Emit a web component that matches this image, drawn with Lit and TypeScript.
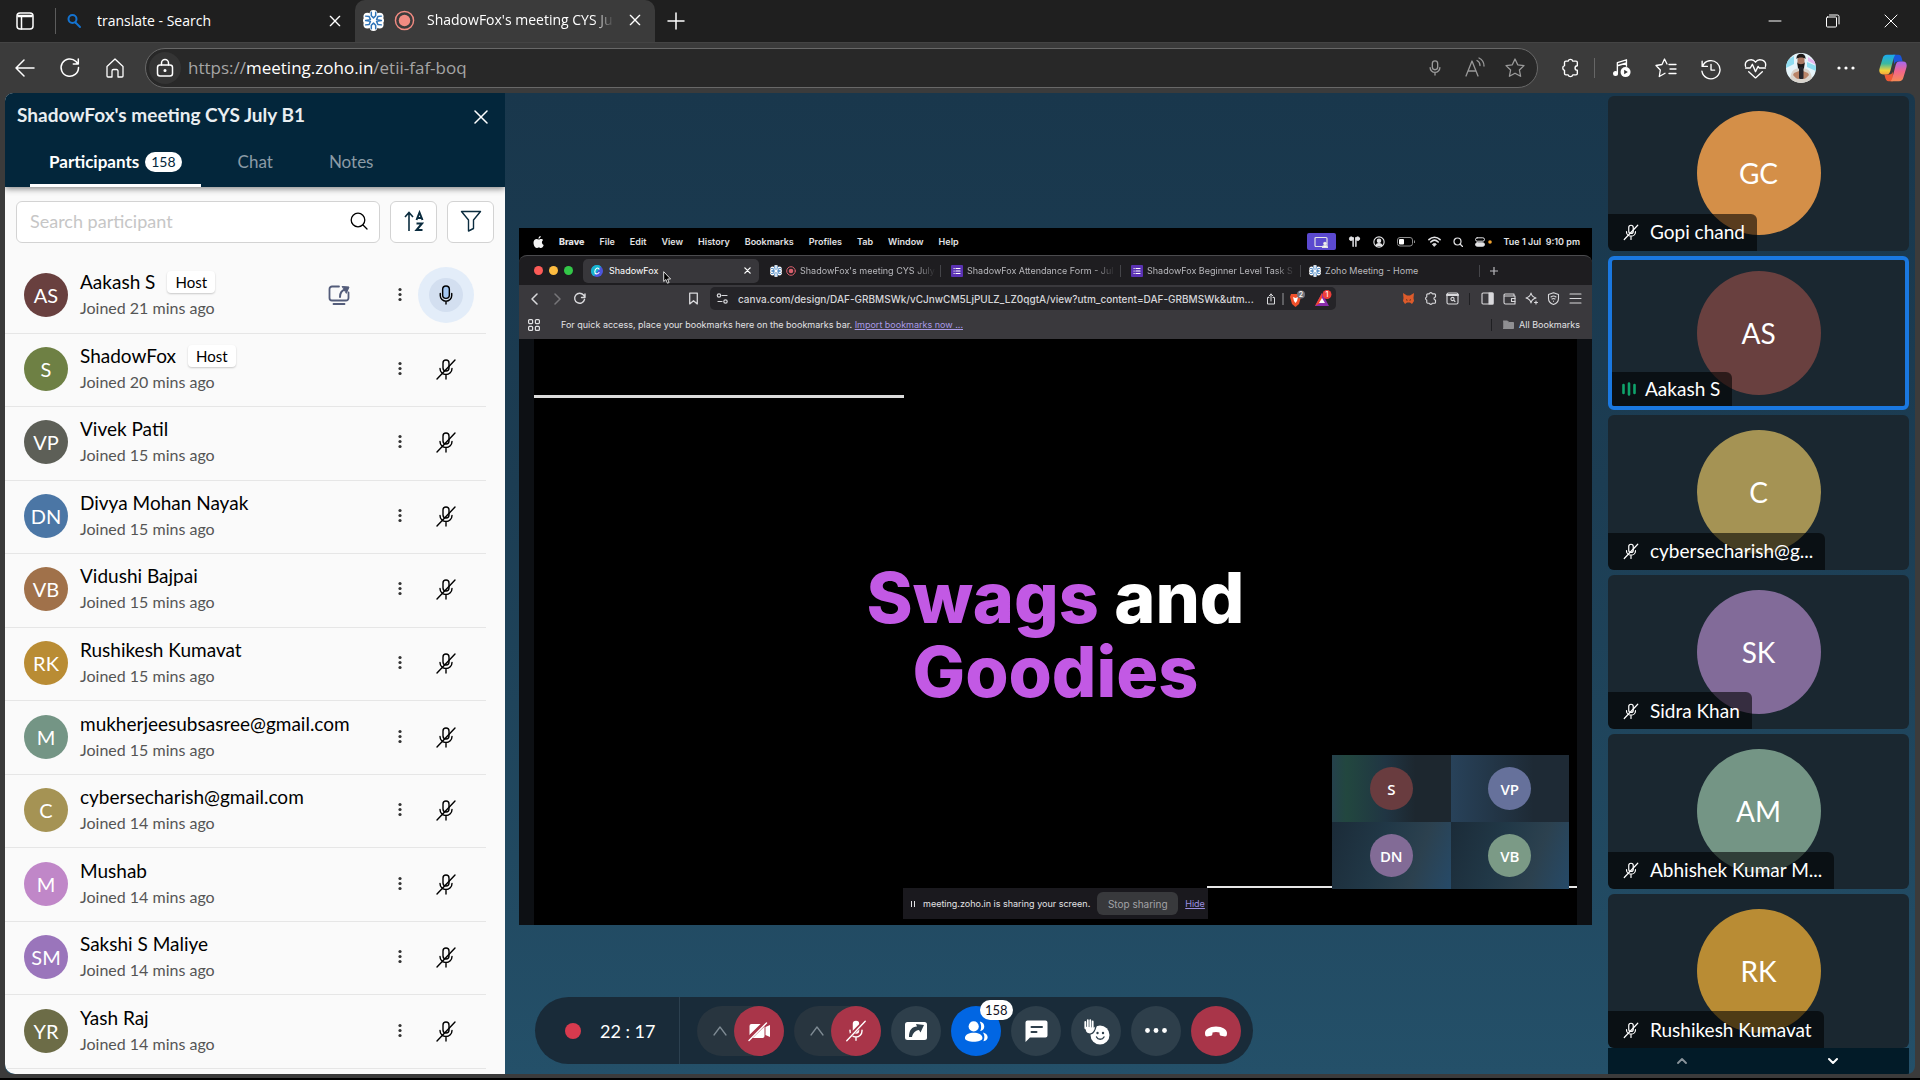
import { LitElement, html, css, svg, nothing, TemplateResult } from "lit";
import { customElement } from "lit/decorators.js";
import { classMap } from "lit/directives/class-map.js";
import { styleMap } from "lit/directives/style-map.js";

/* ---------- shared helpers ---------- */

const icon = (size: number, body: TemplateResult, box = 24, stroke = 1.5) => html`<svg
  width=${size} height=${size} viewBox="0 0 ${box} ${box}" fill="none" stroke="currentColor"
  stroke-width=${stroke} stroke-linecap="round" stroke-linejoin="round" aria-hidden="true">${body}</svg>`;

const base = css`
  *, *::before, *::after { box-sizing: border-box; }
  button, input { font: inherit; color: inherit; margin: 0; padding: 0; border: 0; background: none; }
  button { display: inline-flex; align-items: center; justify-content: center; flex: none; cursor: pointer; }
  a { color: inherit; }
  svg { display: block; flex: none; }
  ul { list-style: none; margin: 0; padding: 0; }
`;

const micOff = svg`<rect x="9" y="3" width="6" height="11" rx="3"/><path d="M6 11.5a6 6 0 0 0 12 0M12 17.5V22M3 22 21 3"/>`;
const closeX = svg`<path d="M5 5 19 19M19 5 5 19"/>`;
const puzzle = svg`<path d="M10 4.500a2.600 2.600 0 0 1 5 0h3.500c.8 0 1.500.7 1.500 1.500v3.500a2.300 2.300 0 0 0 0 5V18c0 .8-.7 1.500-1.500 1.500H15a2.600 2.600 0 0 1-5 0H7.500C6.700 19.500 6 18.800 6 18v-3.500a2.600 2.600 0 0 1 0-5V6c0-.8.7-1.500 1.500-1.500Z"/>`;
const zohoMark = svg`
  <g fill="#fff" stroke="none"><circle cx="12" cy="4.500" r="4.500"/><circle cx="12" cy="19.500" r="4.500"/><circle cx="5" cy="7.500" r="4.500"/><circle cx="19" cy="7.500" r="4.500"/><circle cx="5" cy="16.500" r="4.500"/><circle cx="19" cy="16.500" r="4.500"/><circle cx="3.500" cy="12" r="3.500"/><circle cx="20.500" cy="12" r="3.500"/><circle cx="12" cy="12" r="7"/></g>
  <g stroke="#2f74b8" stroke-width="1.700"><path d="M9.500 2.500v4l2.500 2.500 2.500-2.500v-4M9.500 21.500v-4l2.500-2.500 2.500 2.500v4M3 7l4 .5 1.500 3.500-5.500 1 5.500 1L7 16.500 3 17M21 7l-4 .5-1.500 3.500 5.500 1-5.500 1 1.500 3.500 4 .5"/></g>`;

/* ---------- browser window frame ---------- */

@customElement("browser-frame")
export class BrowserFrame extends LitElement {
  static styles = [base, css`
    :host { display: block; color: #fff; font-family: "Open Sans", "Noto Sans", sans-serif; }
    .tabs { display: flex; align-items: center; height: 42px; background: #1f1f1f; }
    .spaces { width: 50px; height: 42px; }
    .bar { width: 1px; height: 26px; background: #5c5c5c; margin-right: 1px; margin-left: 5px; }
    .tab { display: flex; align-items: center; height: 42px; padding-bottom: 2px; font-size: 14px; line-height: 20px; }
    .tab .label { flex: 1; overflow: hidden; white-space: nowrap; text-align: left; }
    .first { width: 298px; padding: 0 11px 0 9px; gap: 15px; }
    .current { width: 300px; padding-left: 8px; padding-right: 11px; gap: 10px; background: #3b3b3b; border-radius: 10px 10px 0 0; }
    .current .label { padding-left: 2px; -webkit-mask-image: linear-gradient(90deg, #000 88%, transparent 99%); mask-image: linear-gradient(90deg, #000 88%, transparent 99%); }
    .close { width: 18px; height: 24px; }
    .new { width: 42px; height: 42px; }
    .window { display: flex; margin-left: auto; }
    .window button { width: 58px; height: 42px; }
    .tools { display: flex; align-items: center; height: 51px; background: #3b3b3b; border-top: 1px solid #444; }
    .nav { display: flex; padding-left: 2px; }
    .nav button { width: 45px; height: 40px; }
    .address { display: flex; align-items: center; flex: 1; height: 40px; margin-left: 8px; padding: 0 2px 0 3px; border: 1px solid #686868; border-radius: 20px; background: #282828; color: #9a9a9a; }
    .lock { width: 32px; height: 32px; border-radius: 50%; background: #343434; color: #fff; }
    .url { flex: 1; margin-left: 7px; font-size: 17px; line-height: 24px; color: #a5a5a5; text-decoration: none; }
    .url b { font-weight: 400; color: #fff; }
    .address button.act { width: 40px; height: 36px; }
    .extras { display: flex; align-items: center; padding: 0 2px 0 9px; }
    .extras button { width: 45px; height: 40px; }
    .extras .sep { width: 1px; height: 20px; background: #666; margin: 0 3px 0 2px; }
    .extras .copilot { width: 50px; }
  `];

  render() {
    return html`
      <div class="tabs">
        <button class="spaces" aria-label="Workspaces">${icon(20, svg`<rect x="2" y="2" width="16" height="16" rx="3"/><path d="M3 4.500h14M3 5.500h14M6.500 6v12"/>`, 20)}</button>
        <span class="bar"></span>
        <div class="tab first">
          ${icon(16, svg`<g stroke="#1473d0"><circle cx="6.500" cy="6" r="4"/><path d="M9.500 9.500 14 14"/></g>`, 16, 2)}
          <span class="label">translate - Search</span>
          <button class="close" aria-label="Close tab">${icon(16, closeX, 24, 2)}</button>
        </div>
        <div class="tab current">
          ${icon(21, zohoMark)}
          ${icon(21, svg`<circle cx="11" cy="11" r="9.500" stroke="#f28b82"/><circle cx="11" cy="11" r="6" fill="#f28b82" stroke="none"/>`, 22)}
          <span class="label">ShadowFox's meeting CYS Ju</span>
          <button class="close" aria-label="Close tab">${icon(16, closeX, 24, 2)}</button>
        </div>
        <button class="new" aria-label="New tab">${icon(20, svg`<path d="M10 2v16M2 10h16"/>`, 20)}</button>
        <div class="window">
          <button aria-label="Minimize">${icon(14, svg`<path d="M1 7h12"/>`, 14, 1)}</button>
          <button aria-label="Restore">${icon(14, svg`<rect x=".5" y="3" width="10" height="10" rx="1"/><path d="M3.500 1h8a1.500 1.500 0 0 1 1.500 1.500V10"/>`, 14, 1)}</button>
          <button aria-label="Close">${icon(14, svg`<path d="M1 1 13 13M13 1 1 13"/>`, 14, 1)}</button>
        </div>
      </div>
      <div class="tools">
        <div class="nav">
          <button aria-label="Back">${icon(22, svg`<path d="M20 11H2M10 3 2 11l8 8"/>`, 22)}</button>
          <button aria-label="Refresh">${icon(22, svg`<path d="M19.500 10.500A8.700 8.700 0 1 1 17 4.500L19 7M19.300 2v5h-5"/>`, 22)}</button>
          <button aria-label="Home">${icon(22, svg`<path d="M3 9.500 11 2l8 7.500V19a1 1 0 0 1-1 1h-4v-6a1.500 1.500 0 0 0-1.500-1.500h-3A1.500 1.500 0 0 0 8 14v6H4a1 1 0 0 1-1-1Z"/>`, 22, 1.3)}</button>
        </div>
        <div class="address">
          <button class="lock" aria-label="Site information">${icon(20, svg`<rect x="2.500" y="7" width="15" height="11" rx="2.500"/><path d="M6.500 7V5a3.500 3.500 0 0 1 7 0v2"/><circle cx="10" cy="12.500" r=".8" fill="currentColor"/>`, 20)}</button>
          <a class="url" href="https://meeting.zoho.in/etii-faf-boq">https://<b>meeting.zoho.in</b>/etii-faf-boq</a>
          <button class="act" aria-label="Microphone in use">${icon(16, svg`<rect x="6" y="1" width="6" height="10" rx="3"/><path d="M3.500 8.500a5.500 5.500 0 0 0 11 0M9 14v3"/>`, 18)}</button>
          <button class="act" aria-label="Read aloud">${icon(22, svg`<path d="M2 19 8 4l6 15M4 14h8M13 3.500c2 1 3 3 3 5M15 1c3 1.500 5 4.500 5 8"/>`, 22, 1.3)}</button>
          <button class="act" aria-label="Favourite">${icon(22, svg`<path d="m11 2 2.700 5.800 6.300.8-4.600 4.400 1.200 6.300L11 16.200l-5.600 3.100L6.600 13 2 8.600l6.300-.8Z"/>`, 22, 1.3)}</button>
        </div>
        <div class="extras">
          <button aria-label="Extensions">${icon(22, puzzle)}</button>
          <span class="sep"></span>
          <button aria-label="Media">${icon(20, svg`<path d="M7 17V5l10-3v7M7 8.500 17 5.500"/><circle cx="5" cy="17" r="2" fill="currentColor"/><circle cx="16" cy="15.500" r="5.500" fill="#fff" stroke="none"/><path d="m14.500 13 4 2.500-4 2.500Z" fill="#333" stroke="none"/>`, 22)}</button>
          <button aria-label="Favourites">${icon(22, svg`<path d="M14 7.500h7M15 12h6M14 16.500h7M12 7 9.500 2 7 7.500 1 8.500 5.300 13 4.300 19.500l5.700-3.200"/>`, 22, 1.3)}</button>
          <button aria-label="History">${icon(23, svg`<path d="M3 4v5h5M3.500 8.500a8.700 8.700 0 1 1-.7 5M11.500 7v5.500H15"/>`, 22, 1.3)}</button>
          <button aria-label="Performance">${icon(23, svg`<path d="M1.500 9C0 3 8 .5 11 5c3-4.500 11-2 9.500 4M1.500 10.500H6l2-3.500 3 7 2.500-5 1 1.500h6M4.500 14l6.500 6 6.500-6"/>`, 22, 1.3)}</button>
          <button aria-label="Profile">
            <svg width="30" height="30" viewBox="0 0 30 30" aria-hidden="true">
              <clipPath id="face"><circle cx="15" cy="15" r="15"/></clipPath>
              <g clip-path="url(#face)">
                <rect width="30" height="30" fill="#e6f4fa"/><path d="M0 8 8 3v8L0 15ZM21 9l9 4v5l-9-4Z" fill="#8fdcf0"/><path d="M22 4l8 5v3l-8-4Z" fill="#e4b7ef"/>
                <path d="M4 30c0-10 2-15 11-15s11 5 11 15Z" fill="#d9d4cd"/>
                <rect x="11.500" y="3" width="7" height="11" rx="3.500" fill="#a87660"/>
                <path d="M10.500 6c-1-7 10-7 9 0-1.500-2-7.500-2-9 0ZM11.200 9c1 3 6.600 3 7.600 0l-.8 6.500h-6Z" fill="#1d1918"/>
                <path d="M8 20l5-2v8c-3 0-4-2-6-4ZM22 20l-5-2v8c3 0 4-2 6-4Z" fill="#b98468"/><rect x="13" y="14" width="4.500" height="12" rx="1" fill="#26262c"/>
              </g>
            </svg>
          </button>
          <button aria-label="Settings">${icon(20, svg`<g fill="currentColor" stroke="none"><circle cx="3" cy="10" r="1.600"/><circle cx="10" cy="10" r="1.600"/><circle cx="17" cy="10" r="1.600"/></g>`, 20)}</button>
          <button class="copilot" aria-label="Copilot">
            <svg width="28" height="28" viewBox="0 0 28 28" aria-hidden="true">
              <defs>
                <linearGradient id="ca" x1="0" y1="0" x2="0" y2="1"><stop offset="0" stop-color="#1aa9ee"/><stop offset=".45" stop-color="#3bb9a0"/><stop offset=".8" stop-color="#f3d23a"/><stop offset="1" stop-color="#f7a53b"/></linearGradient>
                <linearGradient id="cb" x1="0" y1="0" x2="0" y2="1"><stop offset="0" stop-color="#a568f0"/><stop offset=".5" stop-color="#f2658c"/><stop offset="1" stop-color="#f78a55"/></linearGradient>
              </defs>
              <path d="M14 .8h5.500c1.800 0 2.600 1.200 3.200 3.200l1 3.500h-5c-2 0-3 1-3.500 3Z" fill="#1b55d8"/>
              <path d="M14 27.200H9.500c-1.800 0-2.600-1.200-3.200-3.200l-1-3.500h5c2 0 3-1 3.500-3Z" fill="#ee5a35"/>
              <path d="M8 .8h8.500c-1 1-1.500 2-2 4L11.300 17c-.7 2.500-1.700 3.500-4 3.500H4C.5 20.500-.3 17.500.7 14L3.600 4.500C4.300 2 5.500.8 8 .8Z" fill="url(#ca)"/>
              <path d="M20 27.200h-8.500c1-1 1.500-2 2-4L16.700 11c.7-2.500 1.700-3.500 4-3.500H24c3.500 0 4.300 3 3.300 6.500l-2.900 9.500c-.7 2.500-1.900 3.700-4.400 3.700Z" fill="url(#cb)"/>
            </svg>
          </button>
        </div>
      </div>`;
  }
}

/* ---------- participants panel ---------- */

interface Person { name: string; initials: string; color: string; mins: number; host?: boolean; speaking?: boolean; }

const people: Person[] = [
  { name: "Aakash S", initials: "AS", color: "#69403f", mins: 21, host: true, speaking: true },
  { name: "ShadowFox", initials: "S", color: "#6e8044", mins: 20, host: true },
  { name: "Vivek Patil", initials: "VP", color: "#5d5f57", mins: 15 },
  { name: "Divya Mohan Nayak", initials: "DN", color: "#4b76a5", mins: 15 },
  { name: "Vidushi Bajpai", initials: "VB", color: "#a0714a", mins: 15 },
  { name: "Rushikesh Kumavat", initials: "RK", color: "#b98c34", mins: 15 },
  { name: "mukherjeesubsasree@gmail.com", initials: "M", color: "#749585", mins: 15 },
  { name: "cybersecharish@gmail.com", initials: "C", color: "#a59354", mins: 14 },
  { name: "Mushab", initials: "M", color: "#c087c8", mins: 14 },
  { name: "Sakshi S Maliye", initials: "SM", color: "#9a75bb", mins: 14 },
  { name: "Yash Raj", initials: "YR", color: "#6c6c47", mins: 14 },
];

@customElement("participants-panel")
export class ParticipantsPanel extends LitElement {
  static styles = [base, css`
    :host { display: flex; flex-direction: column; width: 500px; min-height: 0; background: #fafafa; border-radius: 8px 0 0 10px; overflow: hidden; color: #000; }
    header { height: 94px; background: #03263b; color: #fff; box-shadow: 0 2px 6px rgba(0, 0, 0, .45); position: relative; }
    .top { display: flex; align-items: center; justify-content: space-between; height: 46px; padding: 0 14px 2px 12px; }
    h1 { margin: 0; font-size: 19px; line-height: 24px; font-weight: 700; color: #e9eef1; }
    .x { width: 20px; height: 44px; padding-top: 4px; }
    nav { display: flex; height: 48px; gap: 18px; padding-left: 25px; }
    nav button { height: 48px; font-size: 17px; line-height: 24px; padding: 0 19px 2px; color: #8b9ba6; }
    nav button.on { color: #fff; font-weight: 700; gap: 6px; padding-bottom: 0; border-bottom: 3px solid #fff; }
    .count { padding: 0 6px; font-size: 14px; line-height: 20px; border-radius: 10px; background: #fff; color: #03263b; font-weight: 400; min-width: 34px; }
    .find { display: flex; gap: 10px; padding: 14px 11px 0; }
    .box { display: flex; align-items: center; flex: 1; height: 42px; padding: 0 11px 2px 13px; border: 1px solid #d3d3d3; border-radius: 6px; background: #fff; }
    .box input { flex: 1; min-width: 0; font-size: 18px; line-height: 24px; outline: 0; }
    .box input::placeholder { color: #c6c6c6; opacity: 1; }
    .find > button { width: 47px; height: 42px; padding-bottom: 2px; border: 1px solid #d3d3d3; border-radius: 6px; background: #fff; color: #0b2c3f; }
    ul { display: flex; flex-direction: column; flex: 1; padding: 17px 19px 5px 0; }
    li { display: flex; align-items: center; flex: 1; padding: 0 12px 2px 19px; border-bottom: 1px solid #e6e6e6; }
    .avatar { display: flex; align-items: center; justify-content: center; width: 44px; height: 44px; border-radius: 50%; color: #fff; font-size: 20px; margin-right: 12px; }
    .who { flex: 1; min-width: 0; }
    .line { display: flex; align-items: center; height: 24px; gap: 12px; font-size: 19px; line-height: 24px; }
    .host { font-size: 15px; line-height: 20px; padding: 1px 8px; border-radius: 4px; background: #fff; box-shadow: 0 1px 2px rgba(0, 0, 0, .2); }
    .since { font-size: 16px; line-height: 24px; margin-top: 2px; color: #555; }
    .share { color: #535c7a; margin-right: 39px; }
    .more { width: 20px; height: 40px; margin-right: 8px; color: #333; }
    .mic { width: 56px; height: 56px; border-radius: 50%; }
    .live { background: #e3edf9; }
    .live span { display: flex; align-items: center; justify-content: center; width: 34px; height: 34px; border-radius: 50%; background: #d3dff0; }
  `];

  private row(p: Person) {
    return html`<li>
      <span class="avatar" style=${styleMap({ background: p.color })}>${p.initials}</span>
      <div class="who">
        <div class="line">${p.name}${p.host ? html`<span class="host">Host</span>` : nothing}</div>
        <div class="since">Joined ${p.mins} mins ago</div>
      </div>
      ${p.speaking ? html`<span class="share">${icon(24, svg`<path d="M12 3.500H5A2.500 2.500 0 0 0 2.500 6v9A2.500 2.500 0 0 0 5 17.500h14a2.500 2.500 0 0 0 2.500-2.500V9.500M6.500 21h11"/><path d="M13 14c0-4 1.500-6.500 5-7.500" stroke-width="2"/><path d="m15.500 3.500 6.500.5-2.500 6Z" fill="currentColor" stroke-width="1"/>`, 24, 1.8)}</span>` : nothing}
      <button class="more" aria-label="More options">${icon(16, svg`<g fill="currentColor" stroke="none"><circle cx="8" cy="2.500" r="1.600"/><circle cx="8" cy="7.500" r="1.600"/><circle cx="8" cy="12.500" r="1.600"/></g>`, 16)}</button>
      ${p.speaking
        ? html`<button class="mic live" aria-label="Mute"><span>${icon(22, svg`<rect x="8" y="2" width="7" height="13" rx="3.500" fill="#a5c8f2"/><path d="M5.500 10v2a6 6 0 0 0 12 0v-2M11.500 18v3"/>`, 23)}</span></button>`
        : html`<button class="mic" aria-label="Unmute">${icon(24, micOff, 24, 1.4)}</button>`}
    </li>`;
  }

  render() {
    return html`
      <header>
        <div class="top"><h1>ShadowFox's meeting CYS July B1</h1><button class="x" aria-label="Close panel">${icon(14, svg`<path d="M1 1 13 13M13 1 1 13"/>`, 14)}</button></div>
        <nav>
          <button class="on">Participants<span class="count">158</span></button>
          <button>Chat</button>
          <button>Notes</button>
        </nav>
      </header>
      <div class="find">
        <label class="box">
          <input type="text" aria-label="Search participant" placeholder="Search participant">
          ${icon(18, svg`<circle cx="8" cy="8" r="6.800"/><path d="m13 13 4 4"/>`, 18, 1.3)}
        </label>
        <button aria-label="Sort">
          <svg width="20" height="22" viewBox="0 0 20 22" fill="none" stroke="currentColor" aria-hidden="true">
            <path d="M5 21V3M1 7l4-4.500L9 7" stroke-width="1.600"/><path d="m12.500 10 3-7.500 3 7.500M13.500 8h4M12.500 13.500h5.500l-5.500 6.500h6" stroke-width="2"/>
          </svg>
        </button>
        <button aria-label="Filter">${icon(22, svg`<path d="M1.500 1.500h19L13.500 10v8.500l-5 2.500V10Z"/>`, 22, 1.4)}</button>
      </div>
      <ul>${people.map((p) => this.row(p))}</ul>`;
  }
}

/* ---------- shared screen ---------- */

@customElement("shared-screen")
export class SharedScreen extends LitElement {
  static styles = [base, css`
    :host { position: relative; display: flex; flex-direction: column; aspect-ratio: 1073 / 697; background: #000; color: #e2e2e4; font-family: Inter, "Open Sans", sans-serif; font-size: 9px; line-height: 14px; overflow: hidden; }
    .menu { display: flex; align-items: center; height: 27px; padding: 0 12px 0 14px; gap: 15px; font-weight: 600; white-space: nowrap; }
    .menu b { font-weight: 800; }
    .status { display: flex; align-items: center; gap: 12px; margin-left: auto; }
    .cast { display: flex; align-items: center; justify-content: center; width: 29px; height: 17px; border-radius: 2px; background: #5b49cf; }
    .cc { display: flex; align-items: center; gap: 3px; }
    .strip { display: flex; align-items: center; height: 30px; padding-left: 15px; background: #1e1d20; border-top: 1px solid #4b4b4e; border-radius: 8px 8px 0 0; color: #b9b9bd; }
    .lights { display: flex; gap: 6px; width: 49px; }
    .lights i { width: 9px; height: 9px; border-radius: 50%; }
    .r { background: #fc5b57; } .y { background: #fdbc40; } .g { background: #33c748; }
    .tab { display: flex; align-items: center; gap: 4px; height: 24px; padding: 0 8px; }
    .tab span { flex: 1; overflow: hidden; white-space: nowrap; }
    .tab .fade { -webkit-mask-image: linear-gradient(90deg, #000 85%, transparent); mask-image: linear-gradient(90deg, #000 85%, transparent); }
    .open { width: 176px; margin-right: 9px; gap: 6px; border-radius: 5px; background: #38373b; color: #fff; }
    .t1 { width: 172px; padding: 0 4px 0 2px; } .t2 { width: 179px; padding: 0 4px 0 10px; } .t3 { width: 179px; padding: 0 4px 0 10px; } .t4 { width: 178px; }
    .edge { border-right: 1px solid #454549; height: 12px; }
    .strip .add { width: 28px; height: 24px; }
    .tools { display: flex; align-items: center; height: 27px; padding: 0 6px 0 5px; background: #3a393d; color: #d9d9dc; }
    .tools button { width: 22px; height: 22px; }
    .mark { margin: 0 6px 0 92px; }
    .addr { display: flex; align-items: center; flex: 0 0 626px; height: 23px; padding: 0 0 0 4px; border-radius: 5px; background: #252428; font-size: 10px; font-weight: 500; }
    .addr .link { flex: 1; margin-left: 7px; white-space: nowrap; color: #d6d6d9; text-decoration: none; }
    .addr .shield { width: 26px; }
    .right { display: flex; align-items: center; margin-left: auto; }
    .right i, .all i { width: 1px; height: 12px; background: #1f1f22; margin: 0 6px; }
    .books { display: flex; align-items: center; height: 27px; padding: 0 12px 2px 9px; background: #3a393d; }
    .books p { margin: 0 0 0 21px; }
    .books p a { color: #a99be6; }
    .all { display: flex; align-items: center; gap: 5px; margin-left: auto; }
    .slide { position: relative; display: flex; flex-direction: column; align-items: center; flex: 1; border: solid #0d1014; border-width: 0 15px; }
    .slide::before { content: ""; width: 370px; height: 3px; margin: 56px 0 0; background: #dcdcdc; align-self: flex-start; }
    h2 { margin: 163px 0 0; font-size: 70px; line-height: 74px; font-weight: 800; text-align: center; color: #fff; }
    h2 em { font-style: normal; color: #c259e4; }
    .rule { position: absolute; right: 0; bottom: 37px; width: 370px; height: 2px; background: #e6e6e6; }
    .pip { position: absolute; right: 8px; bottom: 36px; display: grid; grid-template-columns: 1fr 1fr; width: 237px; height: 134px; }
    .pip div { display: flex; align-items: center; justify-content: center; background: linear-gradient(90deg, #28425a, #1e2a35 70%); }
    .pip div:nth-child(1) { background: linear-gradient(90deg, #25414c, #22473f 12%, #203543 45%, #1d272f 70%); }
    .pip div:nth-child(n + 3) { background: linear-gradient(110deg, #1b2b38, #213847 40%, #2c414f 70%, #264a68); }
    .pip span { display: flex; align-items: center; justify-content: center; width: 43px; height: 43px; border-radius: 50%; color: #fff; font: 600 15px/20px "Open Sans", sans-serif; }
    .notice { position: absolute; left: 369px; bottom: 6px; display: flex; align-items: center; width: 305px; height: 31px; padding: 0 7px; background: #1a191e; gap: 7px; white-space: nowrap; }
    .notice span { flex: 1; }
    .notice button { width: 81px; height: 23px; border-radius: 6px; background: #38393c; color: #a3a3a7; font-size: 10px; }
    .notice a { color: #9b8fe0; }
    .pointer { position: absolute; left: 144px; top: 43px; }
  `];

  private form = icon(12, svg`<rect width="12" height="12" rx="1" fill="#5b32b4" stroke="none"/><path d="M5 3.500h4M5 6h4M5 8.500h4M3 3.500h.2M3 6h.2M3 8.500h.2" stroke="#fff"/>`, 12, 1.2);

  render() {
    const cells = [["S", "#693c3f"], ["VP", "#66719b"], ["DN", "#826b96"], ["VB", "#7b9a86"]];
    return html`
      <div class="menu">
        <svg width="11" height="12" viewBox="0 0 22 24" fill="#f4f4f4" aria-hidden="true"><path d="M16 6c2 0 3.500 1 4.500 2.200-4 2.500-3.200 8 .9 9.600C20.300 21 18 24 16 24c-1.500 0-2.500-1-4.300-1S9 24 7.500 24C4 24 1 18 1 13.500S3.800 6 7.300 6c1.700 0 3 1.200 4.400 1.200C13 7.200 14 6 16 6ZM15.500 0c.2 3-2.300 5.500-4.500 5.300C10.800 2.600 13 .2 15.500 0Z"/></svg>
        <b>Brave</b>${["File", "Edit", "View", "History", "Bookmarks", "Profiles", "Tab", "Window", "Help"].map((m) => html`<span>${m}</span>`)}
        <div class="status">
          <span class="cast">${icon(14, svg`<rect x="1" y="2.500" width="12" height="9" rx="1"/><circle cx="11" cy="8.500" r="1.200" fill="#fff"/><path d="M8.500 12.500c0-2.500 5-2.500 5 0Z" fill="#fff"/>`, 14, 1.2)}</span>
          ${icon(13, svg`<path d="M5.500 3v9M8.500 3v9" stroke-width="1.600"/><circle cx="3.500" cy="4" r="2" fill="currentColor"/><circle cx="10.500" cy="4" r="2" fill="currentColor"/>`, 14, 1)}
          ${icon(12, svg`<circle cx="7" cy="7" r="6"/><circle cx="7" cy="5.500" r="2" fill="currentColor"/><path d="M3.500 11c1-3 6-3 7 0Z" fill="currentColor"/>`, 14, 1.3)}
          <svg width="19" height="10" viewBox="0 0 19 10" fill="none" stroke="#8c8c8c" aria-hidden="true"><rect x=".5" y=".5" width="15" height="8.500" rx="2.500"/><path d="M17.500 3.500v2.500"/><rect x="2" y="2" width="5" height="5.500" rx="1" fill="#fff" stroke="none"/></svg>
          ${icon(13, svg`<path d="M1 5c3.500-3.500 8.500-3.500 12 0M3 7.500c2.500-2.400 5.500-2.400 8 0"/><path d="m7 12 2-2.200c-1-1-3-1-4 0Z" fill="currentColor" stroke-width="1"/>`, 14, 1.7)}
          ${icon(10, svg`<circle cx="4.500" cy="4.500" r="3.500"/><path d="M7 7 9.500 9.500"/>`, 10, 1.2)}
          <span class="cc">${icon(10, svg`<rect x=".5" y=".8" width="9" height="3.400" rx="1.700"/><rect x=".5" y="5.800" width="9" height="3.400" rx="1.700" fill="currentColor"/>`, 10, 1)}${icon(4, svg`<circle cx="2" cy="2" r="1.800" fill="#f2a32f" stroke="none"/>`, 4)}</span>
          <span>Tue 1 Jul&nbsp; 9:10 pm</span>
        </div>
      </div>
      <div class="strip">
        <div class="lights"><i class="r"></i><i class="y"></i><i class="g"></i></div>
        <div class="tab open">
          ${icon(12, svg`<circle cx="6" cy="6" r="6" fill="#4b55dd" stroke="none"/><path d="M0 6a6 6 0 0 1 10-4.500L3 11.200A6 6 0 0 1 0 6Z" fill="#15b6cf" stroke="none"/><path d="M8 4.200C7.500 2 4 3 3.800 6.500c-.1 3 2.700 3 4.200 1" stroke="#fff" stroke-width="1.100"/>`, 12)}
          <span>ShadowFox</span>${icon(7, svg`<path d="M1 1l6 6M7 1 1 7"/>`, 8, 1.5)}
        </div>
        <div class="tab t1">${icon(12, zohoMark)}${icon(10, svg`<circle cx="5" cy="5" r="4.300" stroke="#d9606d"/><circle cx="5" cy="5" r="2.300" fill="#d9606d" stroke="none"/>`, 10, 1)}<span class="fade">ShadowFox's meeting CYS July</span></div><i class="edge"></i>
        <div class="tab t2">${this.form}<span class="fade">ShadowFox Attendance Form - Jul</span></div><i class="edge"></i>
        <div class="tab t3">${this.form}<span class="fade">ShadowFox Beginner Level Task S</span></div><i class="edge"></i>
        <div class="tab t4">${icon(12, zohoMark)}<span>Zoho Meeting - Home</span></div><i class="edge"></i>
        <button class="add" aria-label="New tab">${icon(8, svg`<path d="M4 0v8M0 4h8"/>`, 8, 1.2)}</button>
      </div>
      <div class="tools">
        <button aria-label="Back">${icon(12, svg`<path d="M8 1 3 6l5 5"/>`, 12)}</button>
        <button aria-label="Forward">${icon(12, svg`<path d="m4 1 5 5-5 5" stroke="#77767a"/>`, 12)}</button>
        <button aria-label="Reload">${icon(13, svg`<path d="M11.500 7.500a5 5 0 1 1-1-4.500L12 5M12 2v3.500H8.500"/>`, 13, 1.4)}</button>
        <button class="mark" aria-label="Bookmark">${icon(13, svg`<path d="M2.500 1h7v10L6 8l-3.500 3Z"/>`, 12, 1.2)}</button>
        <div class="addr">
          ${icon(17, svg`<circle cx="5" cy="5.500" r="1.700"/><path d="M8 5.500h5M4 11.500h4"/><circle cx="11.500" cy="11.500" r="1.700"/>`, 17, 1.2)}
          <a class="link" href="https://canva.com">canva.com/design/DAF-GRBMSWk/vCJnwCM5LjPULZ_LZ0qgtA/view?utm_content=DAF-GRBMSWk&amp;utm...</a>
          <button aria-label="Share">${icon(12, svg`<path d="M4 4.500H2.500V11h7V4.500H8M6 8V1M4 3l2-2 2 2"/>`, 12, 1)}</button>
          <svg width="2" height="12" aria-hidden="true"><path d="M1 0v12" stroke="#99999c"/></svg>
          <button class="shield" aria-label="Shields"><svg width="18" height="18" viewBox="0 0 18 18" aria-hidden="true"><path d="M3 4h9l1 3-2 7-3.500 3L4 14 2 7Z" fill="#f0502b"/><path d="m5 7 2.500 1L10 7l-1 4-1.500 2L6 11Z" fill="#fff"/><circle cx="13" cy="4.500" r="4" fill="#73737b"/><text x="13" y="7" text-anchor="middle" font-size="7" fill="#fff">2</text></svg></button>
          <button class="shield" aria-label="Rewards"><svg width="18" height="18" viewBox="0 0 18 18" aria-hidden="true"><path d="M8 3 1 16h14Z" fill="#8b2cae"/><path d="M8 3 1 16l7-4Z" fill="#f0442f"/><path d="m8 8-3 5h6Z" fill="#fff"/><circle cx="13" cy="4.500" r="4.500" fill="#ee3f3a"/><text x="13" y="7" text-anchor="middle" font-size="7" fill="#fff">1</text></svg></button>
        </div>
        <div class="right">
          <button aria-label="Wallet extension"><svg width="13" height="13" viewBox="0 0 13 13" aria-hidden="true"><path d="m1 1 4 2.500h3L12 1l-.5 5 .5 3-2 3-2-1.500H5L3 12 1 9l.5-3Z" fill="#dd5b2b"/><path d="m4 7 1.500 1L5 9ZM9 7 7.500 8 8 9Z" fill="#2e1a18"/></svg></button>
          <button aria-label="Extensions">${icon(15, puzzle, 24, 1.8)}</button>
          <button aria-label="Search tabs">${icon(13, svg`<rect x="1" y="1" width="11" height="11" rx="1.500"/><path d="M1 3h11" stroke-width="2"/><circle cx="6.500" cy="7" r="1.600"/><path d="m8 8.500 1 1"/>`, 13, 1.1)}</button>
          <i></i>
          <button aria-label="Sidebar">${icon(13, svg`<rect x="1" y="1" width="11" height="11" rx="1"/><path d="M8 1h4v11H8Z" fill="currentColor"/>`, 13, 1.1)}</button>
          <button aria-label="Wallet">${icon(13, svg`<path d="M11 4V2H2a1 1 0 0 0-1 1v7.500c0 .8.500 1.500 1.500 1.500H12V4H2"/><path d="M12 6.500H8.500v3H12"/>`, 13, 1.1)}</button>
          <button aria-label="Assistant">${icon(13, svg`<path d="M6 1c.5 3 1.500 4 5 5-3.500 1-4.500 2-5 5-.5-3-1.500-4-5-5 3.500-1 4.500-2 5-5ZM11 9v3M9.500 10.500h3"/>`, 13, 1.1)}</button>
          <button aria-label="VPN">${icon(13, svg`<path d="m6.500.7 5 1.800v4c0 3-2 5-5 6-3-1-5-3-5-6v-4ZM4 5c1.500-1.200 3.500-1.200 5 0M5 7c1-.7 2-.7 3 0M6.500 9v.2"/>`, 13, 1.1)}</button>
          <button aria-label="Menu">${icon(13, svg`<path d="M1 2h11M1 6.500h11M1 11h11"/>`, 13, 1.1)}</button>
        </div>
      </div>
      <div class="books">
        ${icon(12, svg`<rect x=".6" y=".6" width="4" height="4" rx="1"/><rect x="7.400" y=".6" width="4" height="4" rx="1"/><rect x=".6" y="7.400" width="4" height="4" rx="1"/><rect x="7.400" y="7.400" width="4" height="4" rx="1"/>`, 12, 1.2)}
        <p>For quick access, place your bookmarks here on the bookmarks bar. <a href="#import">Import bookmarks now ...</a></p>
        <div class="all"><i></i>${icon(11, svg`<path d="M.5 2h4L6 3.500h4.500v6H.5Z" fill="#8f8f92" stroke="#8f8f92"/>`, 11, 1)}<span>All Bookmarks</span></div>
      </div>
      <div class="slide">
        <h2><em>Swags</em> and<br><em>Goodies</em></h2>
        <span class="rule"></span>
        <div class="pip">${cells.map(([t, c]) => html`<div><span style=${styleMap({ background: c })}>${t}</span></div>`)}</div>
        <div class="notice">${icon(6, svg`<path d="M1.500 0v8M4.500 0v8"/>`, 6, 1)}<span>meeting.zoho.in is sharing your screen.</span><button>Stop sharing</button><a href="#hide">Hide</a></div>
      </div>
      <svg class="pointer" width="9" height="13" viewBox="0 0 9 13" aria-hidden="true"><path d="M.7.700v9.800l2.200-2 1.500 3.700 1.700-.7-1.500-3.500h3Z" fill="#000" stroke="#ddd"/></svg>`;
  }
}

/* ---------- call controls ---------- */

@customElement("call-controls")
export class CallControls extends LitElement {
  static styles = [base, css`
    :host { display: flex; align-items: center; width: fit-content; height: 67px; border-radius: 34px; background: #192b39; color: #fff; padding-right: 12px; }
    .time { display: flex; align-items: center; height: 67px; width: 145px; padding-left: 30px; gap: 19px; border-right: 1px solid #2c404f; font-size: 18px; line-height: 24px; margin-right: 17px; }
    .time i { width: 16px; height: 16px; border-radius: 50%; background: #d83a4e; }
    .set { display: flex; gap: 10px; }
    .pair { display: flex; width: 87px; height: 50px; border-radius: 25px; background: #28353f; color: #7e8a93; justify-content: flex-end; }
    .pair .up { width: 37px; padding-left: 8px; }
    .round { position: relative; width: 50px; height: 50px; border-radius: 50%; background: #2e3f4b; color: #fff; }
    .red { background: #a93549; }
    .blue { background: #0166e3; }
    .badge { position: absolute; top: -6px; left: 29px; padding: 0 5px; min-width: 32px; border-radius: 10px; background: #fff; color: #112; font-size: 13px; line-height: 20px; }
  `];

  render() {
    const up = html`<button class="up" aria-label="Device options">${icon(14, svg`<path d="m1 11 6-8 6 8"/>`, 14, 1.3)}</button>`;
    const fill = (size: number, b: TemplateResult) => icon(size, svg`<g fill="currentColor" stroke="none">${b}</g>`, 26);
    return html`
      <div class="time"><i></i><span>22 : 17</span></div>
      <div class="set">
        <div class="pair">${up}<button class="round red" aria-label="Turn camera on">${icon(24, svg`<rect x="2.500" y="5" width="15" height="14" rx="2" fill="#fff" stroke="none"/><path d="M18.500 8 23 6v12l-4.500-2Z" fill="#fff" stroke="none"/><path d="M1 20.500 19 3" stroke="#a93549" stroke-width="4.500"/><path d="M2 21.500 19.500 4" stroke-width="1.400"/>`, 24)}</button></div>
        <div class="pair">${up}<button class="round red" aria-label="Unmute">${icon(24, svg`<rect x="9.500" y="2" width="7" height="14" rx="3.500" fill="#fff" stroke="none"/><path d="M6.500 12v1a6.500 6.500 0 0 0 13 0v-1M13 19.500V23"/><path d="M3 22 23 2" stroke="#a93549" stroke-width="4"/><path d="M3 23.500 23 2.500"/>`, 26)}</button></div>
        <button class="round" aria-label="Share screen">${icon(26, svg`<rect x="2" y="4" width="22" height="18" rx="2.500" fill="#fff" stroke="none"/><path d="M6 19c0-7 3-10.500 8-10.500L13 6l8 1-3.500 7.500-1.500-2.500c-4 .5-6 3-7 7Z" fill="#2e3f4b" stroke="none"/>`, 26)}</button>
        <button class="round blue" aria-label="Participants">${fill(24, svg`<circle cx="10.500" cy="8" r="5.500"/><path d="M1 20.500C1 13 20 13 20 20.500 20 26 1 26 1 20.500Z"/><path d="M17 3c6.500 0 6.500 10 .5 10 1.500-2.500 1.500-7-.5-10ZM20.500 14.500c6 1 7.500 8.500.5 9.500 1.500-3 1.500-6.500-.5-9.500Z"/>`)}<span class="badge">158</span></button>
        <button class="round" aria-label="Chat">${icon(26, svg`<path d="M4.500 2.500h18a2 2 0 0 1 2 2v13a2 2 0 0 1-2 2H7l-4.500 4.500V4.500a2 2 0 0 1 2-2Z" fill="#fff" stroke="none"/><path d="M8.500 9h10.500M8.500 14h5" stroke="#2e3f4b" stroke-width="2"/>`, 26)}</button>
        <button class="round" aria-label="Reactions">
          <svg width="28" height="28" viewBox="0 0 28 28" aria-hidden="true">
            <circle cx="18" cy="18" r="9.500" fill="#fff"/>
            <path d="M2.500 9c0 5 2 8 5.500 8 3 0 4-2 5-4.500l1-3-2.500.5Z" fill="#fff" stroke="#2e3f4b" stroke-width="1.200"/>
            <path d="M3.300 5v6M5.800 3.200V10M8.300 3.200V10M10.700 4.500V11" stroke="#fff" stroke-width="1.800" stroke-linecap="round"/>
            <circle cx="15.500" cy="16" r="1.200" fill="#2e3f4b"/><circle cx="21" cy="16" r="1.200" fill="#2e3f4b"/><path d="M14.500 20c1.500 3 6 3 7.500 0" fill="none" stroke="#2e3f4b" stroke-width="1.400" stroke-linecap="round"/>
          </svg>
        </button>
        <button class="round" aria-label="More">${fill(26, svg`<circle cx="4.500" cy="12.500" r="2.400"/><circle cx="13" cy="12.500" r="2.400"/><circle cx="21.500" cy="12.500" r="2.400"/>`)}</button>
        <button class="round red" aria-label="Leave meeting">${fill(26, svg`<path d="M13 8.500c6.500 0 11 3 11 6.500 0 2.500-.5 3.500-2 3.500l-4-.8c-1.200-.3-1.500-1-1.500-3.200-2-.7-5-.7-7 0 0 2.200-.3 2.900-1.500 3.200l-4 .8c-1.500 0-2-1-2-3.500 0-3.500 4.500-6.500 11-6.500Z"/>`)}</button>
      </div>`;
  }
}

/* ---------- gallery ---------- */

const tiles = [
  { name: "Gopi chand", initials: "GC", color: "#d48f48" },
  { name: "Aakash S", initials: "AS", color: "#69403f", live: true },
  { name: "cybersecharish@g...", initials: "C", color: "#a59354" },
  { name: "Sidra Khan", initials: "SK", color: "#826b99" },
  { name: "Abhishek Kumar M...", initials: "AM", color: "#749585" },
  { name: "Rushikesh Kumavat", initials: "RK", color: "#b98c34" },
];

@customElement("tile-gallery")
export class TileGallery extends LitElement {
  static styles = [base, css`
    :host { display: flex; flex-direction: column; width: 307px; padding: 3px 6px 0 0; color: #fff; }
    ul { display: grid; grid-auto-rows: 1fr; flex: 1; gap: 5px; }
    li { position: relative; display: flex; align-items: center; justify-content: center; border-radius: 6px; background: #1a2730; overflow: hidden; }
    .live { border: 4px solid #1a78e0; }
    .disc { display: flex; align-items: center; justify-content: center; width: 124px; height: 124px; border-radius: 50%; font-size: 28px; line-height: 36px; }
    .tag { position: absolute; left: 0; bottom: 0; display: flex; align-items: center; gap: 10px; height: 37px; padding: 0 12px 0 14px; border-top-right-radius: 6px; background: rgba(0, 0, 0, .58); font-size: 19px; line-height: 24px; white-space: nowrap; }
    .live .tag { height: 34px; padding-left: 9px; gap: 8px; }
    .pager { display: flex; height: 26px; background: #021b28; }
    .pager button { flex: 1; padding-right: 2px; color: #fff; }
    .pager button:first-child { color: #8a949b; }
  `];

  render() {
    return html`
      <ul>${tiles.map((t) => html`<li class=${classMap({ live: !!t.live })}>
        <span class="disc" style=${styleMap({ background: t.color })}>${t.initials}</span>
        <div class="tag">${t.live
          ? icon(16, svg`<path d="M2.500 4v8M8 2.500v11M13.500 4v8" stroke="#0fa36b" stroke-width="2.600"/>`, 16)
          : icon(18, micOff, 24, 1.600)}<span>${t.name}</span></div>
      </li>`)}</ul>
      <div class="pager">
        <button aria-label="Previous page">${icon(10, svg`<path d="m1 7 4-4 4 4"/>`, 10, 1.800)}</button>
        <button aria-label="Next page">${icon(10, svg`<path d="m1 3 4 4 4-4"/>`, 10, 2)}</button>
      </div>`;
  }
}

/* ---------- page ---------- */

@customElement("app-root")
export class AppRoot extends LitElement {
  static styles = [base, css`
    :host { display: flex; flex-direction: column; height: 100vh; background: #3b3b3b; border-bottom: 2px solid #000; font-family: Lato, "Open Sans", sans-serif; box-sizing: border-box; overflow: hidden; }
    main { display: flex; flex: 1; min-height: 0; margin: 0 5px 4px; border-radius: 8px; overflow: hidden; background: linear-gradient(#19374c, #1c3d53 40%, #245069); }
    .stage { display: flex; flex-direction: column; justify-content: space-between; flex: 1; min-width: 0; padding: 135px 16px 10px 14px; }
    call-controls { margin-left: 16px; }
  `];

  render() {
    return html`
      <browser-frame></browser-frame>
      <main>
        <participants-panel></participants-panel>
        <section class="stage">
          <shared-screen></shared-screen>
          <call-controls></call-controls>
        </section>
        <tile-gallery></tile-gallery>
      </main>`;
  }
}
